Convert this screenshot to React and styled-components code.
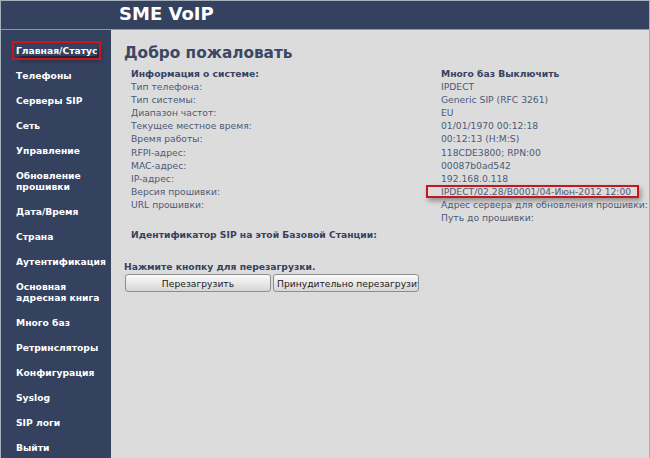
import styled, { createGlobalStyle } from "styled-components";

const GlobalStyle = createGlobalStyle`
  html, body {
    margin: 0;
    padding: 0;
    background: #dcdcdc;
  }
  body {
    font-family: "DejaVu Sans", Verdana, sans-serif;
  }
`;

const NAVY = "#34415f";

const menu = [
  ["Главная/Статус"],
  ["Телефоны"],
  ["Серверы SIP"],
  ["Сеть"],
  ["Управление"],
  ["Обновление", "прошивки"],
  ["Дата/Время"],
  ["Страна"],
  ["Аутентификация"],
  ["Основная", "адресная книга"],
  ["Много баз"],
  ["Ретринсляторы"],
  ["Конфигурация"],
  ["Syslog"],
  ["SIP логи"],
  ["Выйти"],
];

const info = [
  ["Информация о системе:", "Много баз Выключить", true],
  ["Тип телефона:", "IPDECT"],
  ["Тип системы:", "Generic SIP (RFC 3261)"],
  ["Диапазон частот:", "EU"],
  ["Текущее местное время:", "01/01/1970 00:12:18"],
  ["Время работы:", "00:12:13 (H:M:S)"],
  ["RFPI-адрес:", "118CDE3800; RPN:00"],
  ["MAC-адрес:", "00087b0ad542"],
  ["IP-адрес:", "192.168.0.118"],
  ["Версия прошивки:", "IPDECT/02.28/B0001/04-Июн-2012 12:00", false, true],
  ["URL прошивки:", "Адрес сервера для обновления прошивки:"],
  ["", "Путь до прошивки:"],
];

const Frame = styled.div`
  width: 650px;
  height: 458px;
  box-sizing: border-box;
  border-left: 1px solid #a7aebb;
  border-right: 1px solid #a7aebb;
  display: grid;
  grid-template-columns: 110px 1fr;
  grid-template-rows: 30px 1fr;
  overflow: hidden;
`;

const Header = styled.header`
  grid-column: 1 / 3;
  background: ${NAVY};
  border-top: 1px solid #a7aebb;
  border-bottom: 1px solid #8c97ad;
  box-sizing: border-box;
  padding-left: 118px;
  display: flex;
  align-items: center;
`;

const Brand = styled.h1`
  margin: 0 0 3px;
  color: #ffffff;
  font-size: 18px;
  font-weight: bold;
  line-height: 20px;
`;

const Sidebar = styled.nav`
  background: ${NAVY};
  padding: 15px 0 0 15px;
  display: flex;
  flex-direction: column;
  align-items: flex-start;
  gap: 14px;
`;

const NavItem = styled.a`
  display: inline-block;
  color: #ffffff;
  font-size: 9.2px;
  font-weight: bold;
  line-height: 11px;
  text-decoration: none;
  outline: ${({ $active }) => ($active ? "2px solid #c8161d" : "none")};
  outline-offset: 2px;
  box-shadow: ${({ $active }) =>
    $active ? "3px 4px 5px rgba(0, 0, 0, 0.45)" : "none"};
`;

const Content = styled.main`
  padding: 13px 0 0 13px;
  color: #4d5a77;
`;

const Title = styled.h2`
  margin: 0;
  font-size: 15.3px;
  line-height: 20px;
  font-weight: bold;
  color: #3b4764;
`;

const InfoGrid = styled.div`
  margin: 4px 0 0 7px;
  display: grid;
  grid-template-columns: 310px 1fr;
  font-size: 9.2px;
  line-height: 13.1px;
  white-space: nowrap;
`;

const Cell = styled.div`
  font-weight: ${({ $bold }) => ($bold ? "bold" : "normal")};
  color: ${({ $bold }) => ($bold ? "#36425f" : "#4d5a77")};
`;

const Highlight = styled.span`
  position: relative;
  &::before {
    content: "";
    position: absolute;
    left: -15px;
    right: -8px;
    top: -1px;
    bottom: -1px;
    border: 2px solid #c8161d;
    box-shadow: 2px 3px 5px rgba(0, 0, 0, 0.35);
  }
`;

const SipId = styled.div`
  margin: 4px 0 0 7px;
  font-size: 9.2px;
  line-height: 13px;
  font-weight: bold;
  color: #36425f;
`;

const RebootLabel = styled.div`
  margin-top: 19px;
  font-size: 9.2px;
  line-height: 13px;
  font-weight: bold;
  color: #36425f;
`;

const ButtonRow = styled.div`
  display: flex;
  gap: 2px;
  margin-top: 1px;
  padding-left: 1px;
`;

const Button = styled.button`
  width: 146px;
  height: 18px;
  padding: 0 3px;
  border: 1px solid #8d8d8d;
  border-radius: 3px;
  background: linear-gradient(#fbfbfb, #e6e6e6 55%, #d6d6d6);
  font-family: "DejaVu Sans", Verdana, sans-serif;
  font-size: 9.2px;
  color: #222;
  white-space: nowrap;
  overflow: hidden;
  text-align: ${({ $clip }) => ($clip ? "left" : "center")};
`;

export default function App() {
  return (
    <>
      <GlobalStyle />
      <Frame>
        <Header>
          <Brand>SME VoIP</Brand>
        </Header>
        <Sidebar>
          {menu.map((lines, i) => (
            <NavItem key={i} href="#" $active={i === 0}>
              {lines.map((l, j) => (
                <div key={j}>{l}</div>
              ))}
            </NavItem>
          ))}
        </Sidebar>
        <Content>
          <Title>Добро пожаловать</Title>
          <InfoGrid>
            {info.map(([label, value, bold, mark], i) => (
              <>
                <Cell key={"l" + i} $bold={bold}>
                  {label}
                </Cell>
                <Cell key={"v" + i} $bold={bold}>
                  {mark ? <Highlight>{value}</Highlight> : value}
                </Cell>
              </>
            ))}
          </InfoGrid>
          <SipId>Идентификатор SIP на этой Базовой Станции:</SipId>
          <RebootLabel>Нажмите кнопку для перезагрузки.</RebootLabel>
          <ButtonRow>
            <Button>Перезагрузить</Button>
            <Button $clip>Принудительно перезагрузить</Button>
          </ButtonRow>
        </Content>
      </Frame>
    </>
  );
}
